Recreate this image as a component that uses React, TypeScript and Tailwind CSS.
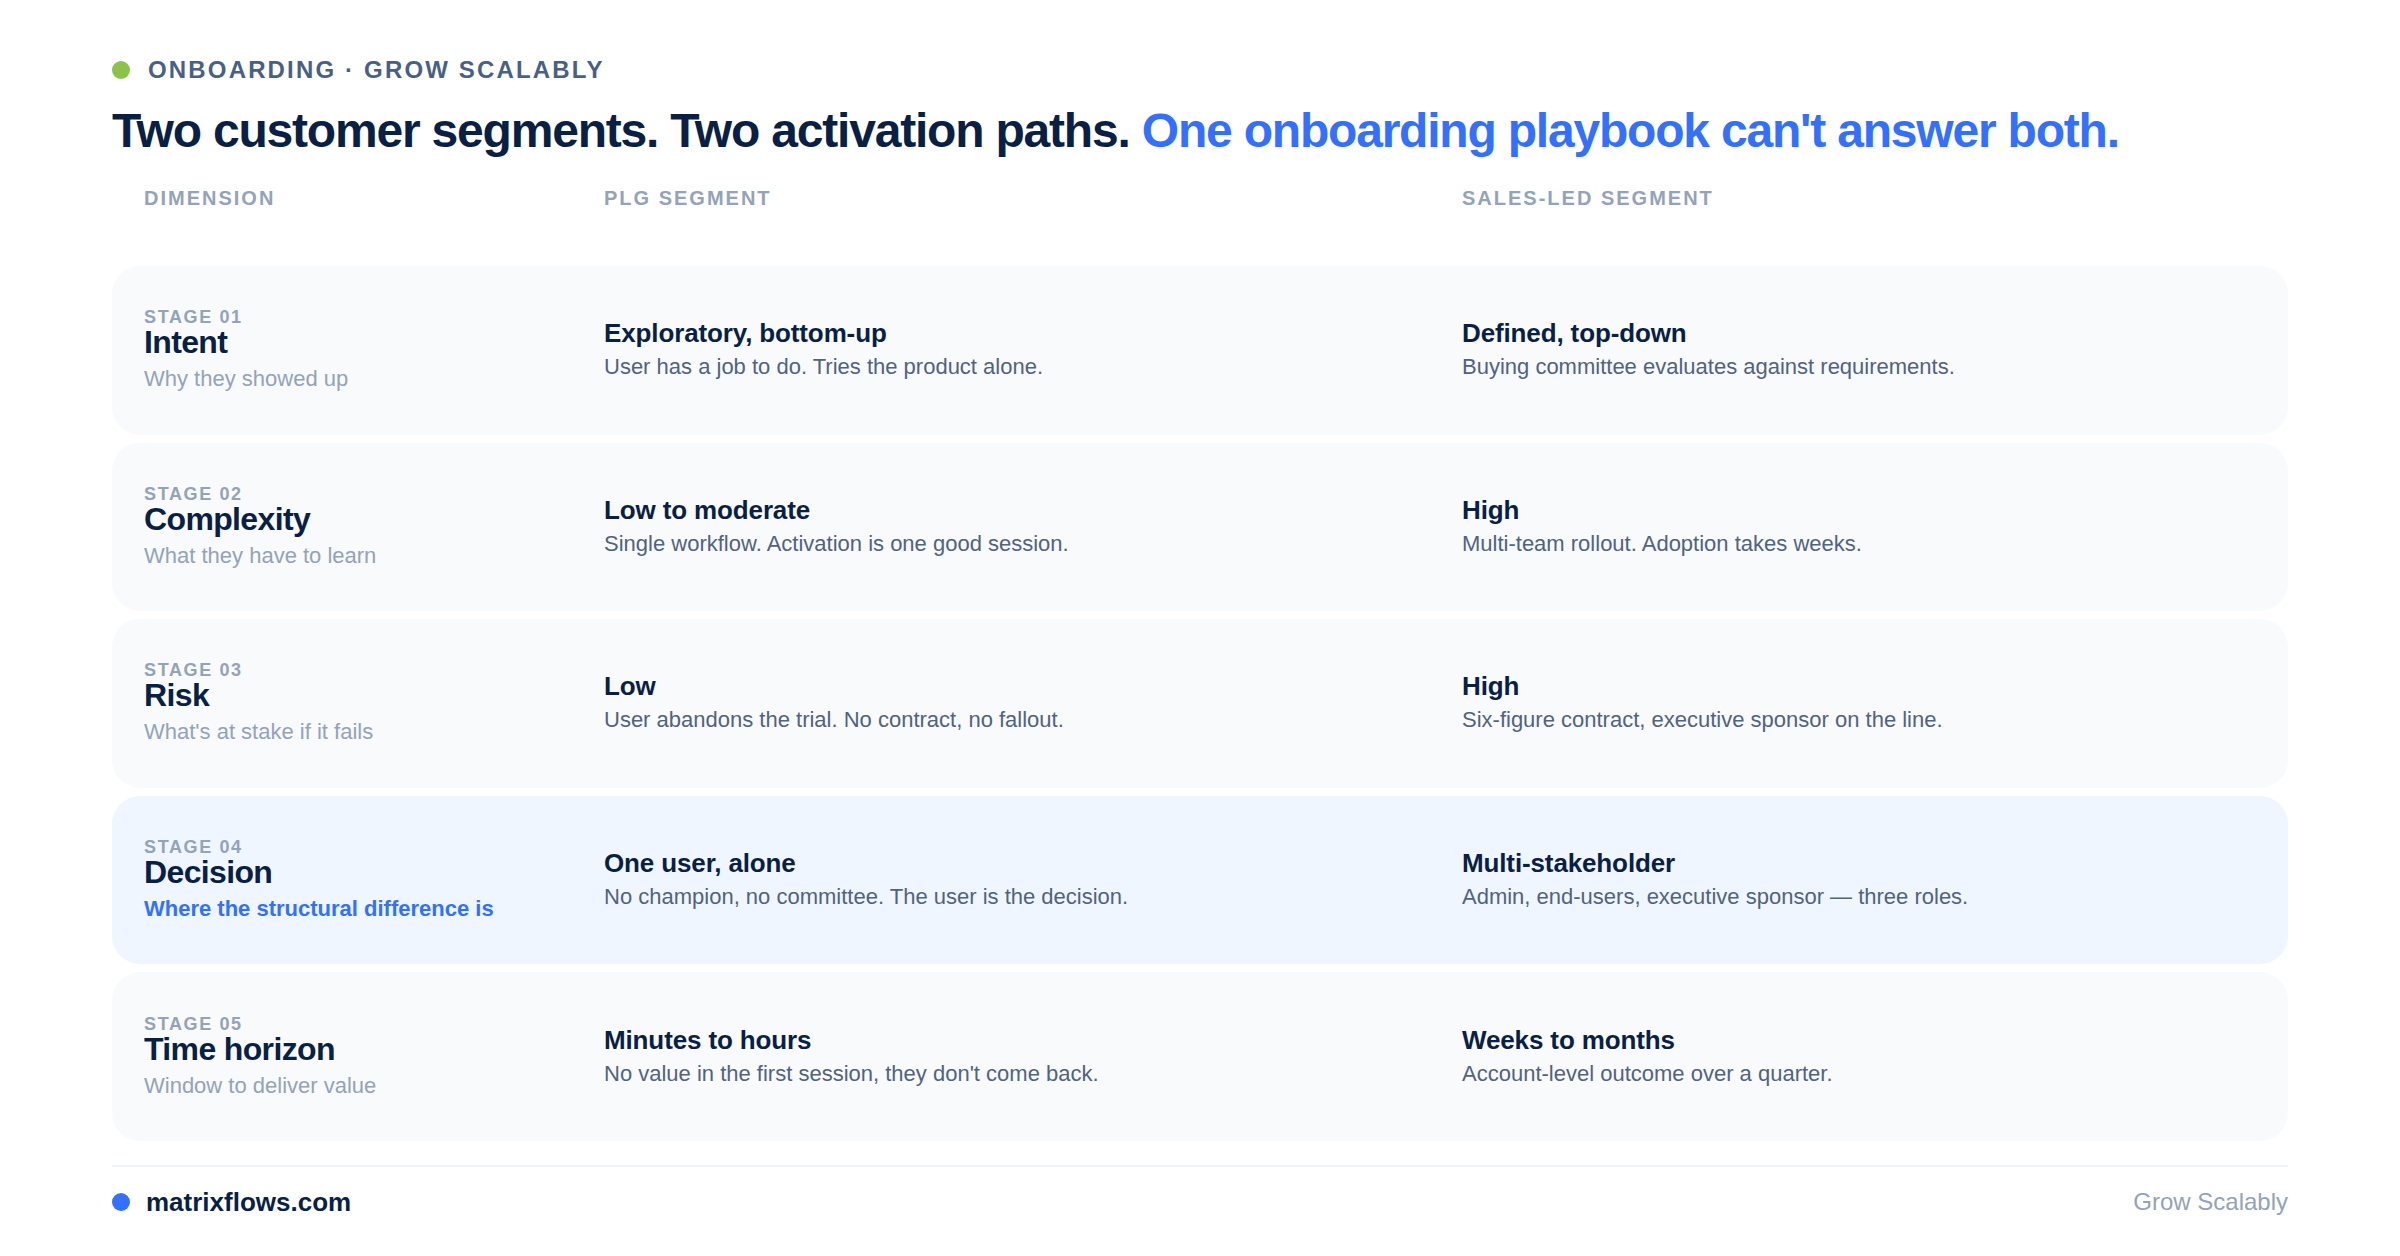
const ROWS = [
  {
    stage: "STAGE 01",
    name: "Intent",
    why: "Why they showed up",
    plgTitle: "Exploratory, bottom-up",
    plgText: "User has a job to do. Tries the product alone.",
    salesTitle: "Defined, top-down",
    salesText: "Buying committee evaluates against requirements.",
  },
  {
    stage: "STAGE 02",
    name: "Complexity",
    why: "What they have to learn",
    plgTitle: "Low to moderate",
    plgText: "Single workflow. Activation is one good session.",
    salesTitle: "High",
    salesText: "Multi-team rollout. Adoption takes weeks.",
  },
  {
    stage: "STAGE 03",
    name: "Risk",
    why: "What's at stake if it fails",
    plgTitle: "Low",
    plgText: "User abandons the trial. No contract, no fallout.",
    salesTitle: "High",
    salesText: "Six-figure contract, executive sponsor on the line.",
  },
  {
    stage: "STAGE 04",
    name: "Decision",
    why: "Where the structural difference is",
    plgTitle: "One user, alone",
    plgText: "No champion, no committee. The user is the decision.",
    salesTitle: "Multi-stakeholder",
    salesText: "Admin, end-users, executive sponsor — three roles.",
    highlight: true,
  },
  {
    stage: "STAGE 05",
    name: "Time horizon",
    why: "Window to deliver value",
    plgTitle: "Minutes to hours",
    plgText: "No value in the first session, they don't come back.",
    salesTitle: "Weeks to months",
    salesText: "Account-level outcome over a quarter.",
  },
];

function Cell({ title, text }: { title: string; text: string }) {
  return (
    <div>
      <div className="text-[26px] leading-[32px] font-bold tracking-[-0.13px] text-[#0a1f44]">{title}</div>
      <div className="mt-[2px] text-[22px] leading-[32px] text-[#526380]">{text}</div>
    </div>
  );
}

export default function App() {
  return (
    <div className="flex h-[1256px] w-[2400px] flex-col bg-white px-[112px] pt-[56px] pb-[37px] font-['Liberation_Sans',Arial,sans-serif]">
      <div className="flex h-[28px] items-center gap-[18px]">
        <span className="h-[18px] w-[18px] rounded-full bg-[#8bc34a]" />
        <span className="text-[24px] leading-[28px] font-bold tracking-[2.16px] text-[#4a5f85]">
          ONBOARDING · GROW SCALABLY
        </span>
      </div>

      <h1 className="mt-[18px] text-[48px] leading-[58px] font-bold tracking-[-1.2px] whitespace-nowrap text-[#0a1f44]">
        Two customer segments. Two activation paths.{" "}
        <span className="text-[#3370ff]">One onboarding playbook can't answer both.</span>
      </h1>

      <div className="mt-[22px] grid h-[32px] grid-cols-[396px_1fr_1fr] items-center gap-x-[64px] px-[32px] text-[20px] leading-[24px] font-bold tracking-[2px] text-[#94a3b8]">
        <div>DIMENSION</div>
        <div>PLG SEGMENT</div>
        <div>SALES-LED SEGMENT</div>
      </div>

      <div className="mt-[52px] flex min-h-0 flex-1 flex-col gap-[8px]">
        {ROWS.map((row) => (
          <div
            key={row.stage}
            className={`grid flex-1 grid-cols-[396px_1fr_1fr] items-center gap-x-[64px] rounded-[28px] px-[32px] ${
              row.highlight ? "bg-[#eff6ff]" : "bg-[#f8fafc]"
            }`}
          >
            <div className="pt-[3px]">
              <div className="text-[18px] leading-[18px] font-bold tracking-[1.62px] text-[#94a3b8]">{row.stage}</div>
              <div className="text-[32px] leading-[32px] font-bold tracking-[-0.64px] text-[#0a1f44]">{row.name}</div>
              <div
                className={
                  row.highlight
                    ? "mt-[5px] text-[22px] leading-[32px] font-bold text-[#3370ff]"
                    : "mt-[5px] text-[22px] leading-[32px] text-[#94a3b8]"
                }
              >
                {row.why}
              </div>
            </div>
            <Cell title={row.plgTitle} text={row.plgText} />
            <Cell title={row.salesTitle} text={row.salesText} />
          </div>
        ))}
      </div>

      <div className="mt-[24px] flex items-center justify-between border-t-2 border-[#f1f5f9] pt-[18px]">
        <div className="flex items-center gap-[16px]">
          <span className="h-[18px] w-[18px] rounded-full bg-[#3370ff]" />
          <span className="text-[26px] leading-[34px] font-bold text-[#0a1f44]">matrixflows.com</span>
        </div>
        <span className="text-[24px] leading-[34px] text-[#94a3b8]">Grow Scalably</span>
      </div>
    </div>
  );
}
